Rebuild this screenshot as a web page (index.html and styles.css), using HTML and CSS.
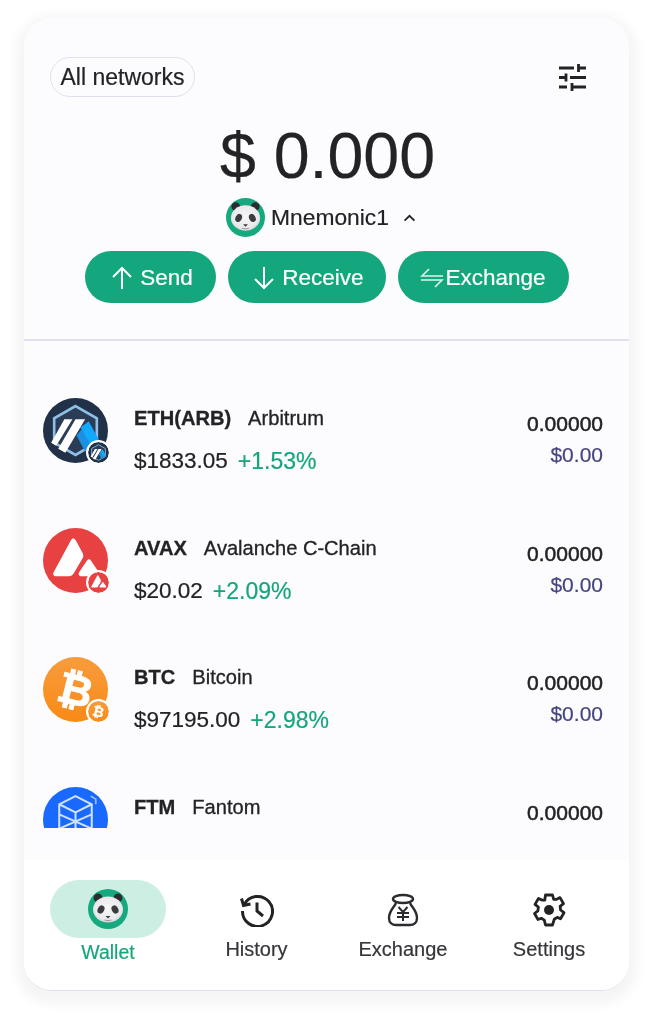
FILE: index.html
```html
<!DOCTYPE html>
<html lang="en">
<head>
<meta charset="utf-8">
<title>Wallet</title>
<link rel="stylesheet" href="styles.css">
</head>
<body>
<svg class="defs" width="0" height="0" aria-hidden="true">
  <defs>
    <radialGradient id="pandaface" cx=".5" cy=".45" r=".6">
      <stop offset="0" stop-color="#f7f7f8"/>
      <stop offset=".75" stop-color="#e9e9ec"/>
      <stop offset="1" stop-color="#c4c4ca"/>
    </radialGradient>
    <g id="panda">
      <circle cx="20" cy="20" r="20" fill="#14a97f"/>
      <circle cx="10" cy="8.800" r="4.400" fill="#2b2b30"/>
      <circle cx="30" cy="8.800" r="4.400" fill="#2b2b30"/>
      <ellipse cx="20" cy="20.500" rx="15" ry="13" fill="url(#pandaface)"/>
      <ellipse cx="13" cy="20.500" rx="3.200" ry="4.300" fill="#3a3a40" transform="rotate(28 13 20.500)"/>
      <ellipse cx="27" cy="20.500" rx="3.200" ry="4.300" fill="#3a3a40" transform="rotate(-28 27 20.500)"/>
      <path d="M17.500 27h5l-2.500 2.500z" fill="#3a3a40"/>
      <path d="M16.500 31q3.500 1.300 7 0" fill="none" stroke="#9a9aa2" stroke-width="1"/>
    </g>
    <g id="arb">
      <circle cx="32" cy="32" r="32" fill="#213147"/>
      <path d="M32 8 53 20v24L32 56 11 44V20z" fill="#2b3d56" stroke="#8fbfe6" stroke-width="2.600"/>
      <path d="M37 29 45 23 55 41 46 47z" fill="#12aaff"/>
      <path d="M33 37 38 31 48 48 41 52z" fill="#1b8fe0"/>
      <path d="M21 21h8L13 47l-5-3z" fill="#fff"/>
      <path d="M32 21h9.500L22 54l-7-4z" fill="#fff"/>
    </g>
    <g id="avax">
      <circle cx="32" cy="32" r="32" fill="#e84142"/>
      <path d="M27.500 12c1.300-2.300 3.400-2.300 4.700 0l6.800 12.500c.9 1.800.9 3.400 0 5.200L30 45c-1.100 1.600-2.400 2.400-4.300 2.400H13c-2.600 0-3.700-1.900-2.400-4.200z" fill="#fff"/>
      <path d="M43 32.500c1.200-2.200 3.300-2.200 4.500 0l7.500 11c1.300 2.200.2 4-2.400 4H38c-2.500 0-3.600-1.800-2.400-4z" fill="#fff"/>
    </g>
    <g id="btc">
      <circle cx="32" cy="32" r="32" fill="url(#btcfill)"/>
      <text x="32" y="47" text-anchor="middle" class="btc-glyph" transform="rotate(14 32 32)">₿</text>
    </g>
    <linearGradient id="btcfill" x1="0" y1="0" x2="0" y2="1">
      <stop offset="0" stop-color="#f79c3d"/>
      <stop offset="1" stop-color="#f98a16"/>
    </linearGradient>
  </defs>
</svg>

<main class="card">
  <section class="hero">
    <div class="hero-top">
      <button class="network-pill">All networks</button>
      <svg class="filter-icon" viewBox="0 0 27 27" fill="none" stroke="#232326" stroke-width="2.800">
        <path d="M0 4h15M19.500 0v8M19.500 4H27M0 13.500h4M7 9.500v8M7 13.500H4M11 13.500h16M0 23h8M13 19v8M13 23h14"/>
      </svg>
    </div>
    <div class="balance">$ 0.000</div>
    <div class="account">
      <svg class="avatar" viewBox="0 0 40 40"><use href="#panda"/></svg>
      <span>Mnemonic1</span>
      <svg class="chevron" viewBox="0 0 14 9" fill="none" stroke="#232326" stroke-width="2"><path d="M1.500 7.500 7 2l5.500 5.500"/></svg>
    </div>
    <div class="actions">
      <button class="action action-send">
        <svg class="action-icon" viewBox="0 0 22 24" fill="none" stroke="#fff" stroke-width="2"><path d="M11 23V2M2 11l9-9 9 9"/></svg>
        <span>Send</span>
      </button>
      <button class="action action-receive">
        <svg class="action-icon" viewBox="0 0 22 24" fill="none" stroke="#fff" stroke-width="2"><path d="M11 1v21M2 13l9 9 9-9"/></svg>
        <span>Receive</span>
      </button>
      <button class="action action-exchange">
        <svg class="action-swap" viewBox="0 0 24 20" fill="none" stroke="#dff3ec" stroke-width="1.600"><path d="M23 8H2l7-7M1 12h21l-7 7"/></svg>
        <span>Exchange</span>
      </button>
    </div>
  </section>

  <section class="list">
    <article class="row">
      <div class="coin">
        <svg class="coin-main" viewBox="0 0 64 64"><use href="#arb"/></svg>
        <svg class="coin-badge badge-arb" viewBox="0 0 64 64"><use href="#arb"/></svg>
      </div>
      <div class="info">
        <div class="names"><b>ETH(ARB)</b><span>Arbitrum</span></div>
        <div class="prices"><span>$1833.05</span><em>+1.53%</em></div>
      </div>
      <div class="amounts"><strong>0.00000</strong><small>$0.00</small></div>
    </article>

    <article class="row">
      <div class="coin">
        <svg class="coin-main" viewBox="0 0 64 64"><use href="#avax"/></svg>
        <svg class="coin-badge" viewBox="0 0 64 64"><use href="#avax"/></svg>
      </div>
      <div class="info">
        <div class="names"><b>AVAX</b><span>Avalanche C-Chain</span></div>
        <div class="prices"><span>$20.02</span><em>+2.09%</em></div>
      </div>
      <div class="amounts"><strong>0.00000</strong><small>$0.00</small></div>
    </article>

    <article class="row">
      <div class="coin">
        <svg class="coin-main" viewBox="0 0 64 64"><use href="#btc"/></svg>
        <svg class="coin-badge" viewBox="0 0 64 64"><use href="#btc"/></svg>
      </div>
      <div class="info">
        <div class="names"><b>BTC</b><span>Bitcoin</span></div>
        <div class="prices"><span>$97195.00</span><em>+2.98%</em></div>
      </div>
      <div class="amounts"><strong>0.00000</strong><small>$0.00</small></div>
    </article>

    <article class="row">
      <div class="coin">
        <svg class="coin-main" viewBox="0 0 64 64">
          <circle cx="32" cy="32" r="32" fill="#1969ff"/>
          <g fill="none" stroke="#fff" stroke-width="2" opacity=".8">
            <path d="M32 9 48 17v40H16V17z"/>
            <path d="M16 17l16 8 16-8M32 25v32M16 27l32 14M48 27L16 41"/>
          </g>
          <path d="M47 9l5 3v5" fill="none" stroke="#fff" stroke-width="1.500" opacity=".6"/>
        </svg>
      </div>
      <div class="info">
        <div class="names"><b>FTM</b><span>Fantom</span></div>
      </div>
      <div class="amounts"><strong>0.00000</strong></div>
    </article>
  </section>
  <div class="list-spacer"></div>

  <nav class="tabbar">
    <a class="tab tab-active">
      <span class="tab-pill"><svg class="tab-panda" viewBox="0 0 40 40"><use href="#panda"/></svg></span>
      <span class="tab-label">Wallet</span>
    </a>
    <a class="tab">
      <svg class="tab-icon" viewBox="0 0 34 34" fill="none" stroke="#232326" stroke-width="3">
        <path d="M4.200 11.500A15 15 0 1 1 2.500 18"/>
        <path d="M1.500 5.500 3.500 12.500 10.500 11"/>
        <path d="M17 9.500V18l6 5"/>
      </svg>
      <span class="tab-label">History</span>
    </a>
    <a class="tab">
      <svg class="tab-icon" viewBox="0 0 34 34" fill="none" stroke="#2c2c30" stroke-width="2.400">
        <ellipse cx="17" cy="6" rx="10" ry="4"/>
        <path d="M10 10C8 14.500 3 18 3 25c0 5 3.500 7 7 7h14c3.500 0 7-2 7-7 0-7-5-10.500-7-15"/>
        <path d="M12.500 14l4.500 5 4.500-5M11 20h12M11 24h12M17 19v9" stroke-width="2"/>
      </svg>
      <span class="tab-label">Exchange</span>
    </a>
    <a class="tab">
      <svg class="tab-icon" viewBox="0 0 34 34" fill="none" stroke="#232326" stroke-width="2.800" stroke-linejoin="round">
        <path d="M13.500 2h7l1.200 4.400 3-.1 3.300-1.700 3.500 6-3.400 2.700.5 3.700 3.400 2.700-3.500 6-3.300-1.300-3 1.900L20.500 32h-7l-1.200-4.900-3-1.900-3.300 1.300-3.500-6 3.400-2.700.5-3.700L3 11.400l3.500-6 3.300 1.700 3-.1z"/>
        <circle cx="17" cy="17" r="5" fill="#232326" stroke="none"/>
      </svg>
      <span class="tab-label">Settings</span>
    </a>
  </nav>
</main>
</body>
</html>
```
FILE: styles.css
```css
* { box-sizing: border-box; }
html, body { margin: 0; padding: 0; }
body {
  width: 652px;
  height: 1024px;
  background: #fff;
  padding: 18px 23px 33px 24px;
  font-family: "Liberation Sans", Arial, sans-serif;
  color: #232326;
  overflow: hidden;
  -webkit-text-stroke-width: .2px;
}
button { font: inherit; border: 0; padding: 0; }
.defs { position: absolute; }
.btc-glyph { font: bold 42px "DejaVu Sans", sans-serif; fill: #fff; stroke: #fff; stroke-width: .8px; }

.card {
  height: 973px;
  display: flex;
  flex-direction: column;
  background: #fcfcff;
  border-radius: 28px;
  border-bottom: 1px solid #dedeee;
  box-shadow: 0 5px 12px 8px rgba(30, 30, 40, .045);
  overflow: hidden;
  filter: blur(.35px);
}

/* hero */
.hero {
  height: 323px;
  flex: none;
  border-bottom: 2px solid #e0e0ee;
  display: flex;
  flex-direction: column;
  align-items: center;
  padding-top: 39px;
}
.hero-top {
  width: 100%;
  display: flex;
  justify-content: space-between;
  align-items: center;
  padding: 0 43px 0 26px;
}
.network-pill {
  width: 145px;
  height: 40px;
  border: 1px solid #dfe0ee;
  border-radius: 20px;
  background: transparent;
  color: #232326;
  font-size: 23px;
  text-align: center;
}
.filter-icon { width: 27px; height: 27px; }
.balance {
  font-size: 64.500px;
  line-height: 74px;
  margin-top: 22px;
  padding-left: 2px;
}
.account {
  display: flex;
  align-items: center;
  font-size: 22.800px;
  margin-top: 5px;
  height: 39px;
  padding-right: 11px;
}
.avatar { width: 39px; height: 39px; margin-right: 6px; }
.chevron { width: 13px; height: 8px; margin-left: 14px; }
.actions {
  display: flex;
  gap: 12px;
  margin-top: 14px;
}
.action {
  height: 52px;
  border-radius: 26px;
  background: #14a67d;
  color: #fff;
  font-size: 22.500px;
  display: flex;
  align-items: center;
  justify-content: center;
  padding-top: 1px;
}
.action-send { width: 131px; padding-left: 4px; }
.action-receive { width: 158px; padding-left: 4px; }
.action-exchange { width: 171px; }
.action-icon { width: 22px; height: 24px; margin-right: 7px; }
.action-swap { width: 24px; height: 20px; margin-right: 1px; }

/* list */
.list {
  height: 487px;
  flex: none;
  overflow: hidden;
  padding: 57px 26px 0 19px;
}
.list-spacer { flex: none; height: 32px; }
.row {
  height: 129.600px;
  display: flex;
  align-items: flex-start;
}
.coin { position: relative; width: 65px; height: 65px; flex: none; }
.coin-main { width: 65px; height: 65px; display: block; }
.coin-badge {
  position: absolute;
  right: -3px;
  bottom: -2px;
  width: 25px;
  height: 25px;
  border-radius: 50%;
  border: 2px solid #fff;
  background: #fff;
}
.info { margin-left: 26px; flex: 1; }
.names {
  display: flex;
  align-items: baseline;
  font-size: 20.100px;
  line-height: 24px;
  margin-top: 8px;
  -webkit-text-stroke-width: .3px;
}
.names b { margin-right: 17px; }
.prices {
  display: flex;
  font-size: 22.500px;
  line-height: 26px;
  margin-top: 18px;
}
.prices em { font-style: normal; color: #14a67d; margin-left: 10px; font-size: 23px; }
.amounts {
  display: flex;
  flex-direction: column;
  align-items: flex-end;
  margin-top: 14px;
  font-size: 21px;
  line-height: 24px;
}
.amounts strong { font-weight: normal; -webkit-text-stroke-width: .5px; }
.amounts small { font-size: 21px; color: #45457f; margin-top: 7px; }

/* tabbar */
.tabbar {
  flex: 1;
  background: #fff;
  display: grid;
  grid-template-columns: 150px 147px 146px 146px;
  padding: 20px 0 0 9px;
  align-items: start;
}
.tab {
  display: flex;
  flex-direction: column;
  align-items: center;
  font-size: 20px;
  color: #36363a;
}
.tab-pill {
  width: 116px;
  height: 58px;
  border-radius: 29px;
  background: #cdeee2;
  display: flex;
  align-items: center;
  justify-content: center;
}
.tab-panda { width: 40px; height: 40px; }
.tab-icon { width: 34px; height: 34px; margin-top: 13px; }
.tab-label { line-height: 24px; margin-top: 10px; }
.tab-active .tab-label { color: #14a67d; margin-top: 2px; font-size: 19.500px; }
```
